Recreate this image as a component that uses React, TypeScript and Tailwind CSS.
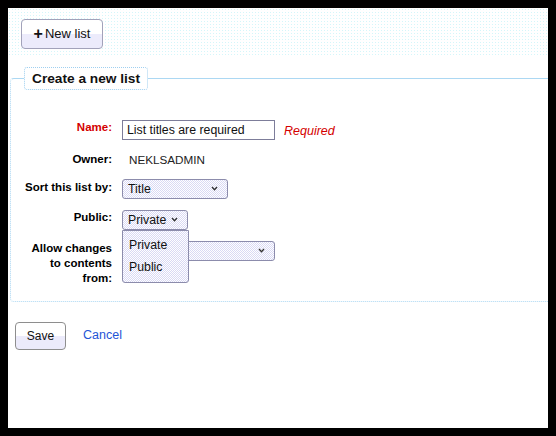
import React from 'react'

const dither = 'bg-[repeating-conic-gradient(#d9d9f4_0_25%,#ffffff_0_50%)] bg-[length:2px_2px]'

const Chevron = () => (
    <svg width="7" height="5" viewBox="0 0 7 5" className="shrink-0">
        <polyline points="1,1 3.5,3.8 6,1" fill="none" stroke="#333" strokeWidth="1.3" />
    </svg>
)

const FakeSelect: React.FC<{ value: string; width: string }> = ({ value, width }) => (
    <div
        className={`h-[20px] ${width} border border-[#8c8cac] rounded-[3px] ${dither} flex items-center justify-between pl-[5px] pr-[9px] text-[12.3px] text-[#111]`}
    >
        <span>{value}</span>
        <Chevron />
    </div>
)

const Label: React.FC<{ children: React.ReactNode; red?: boolean; className?: string }> = ({ children, red, className = '' }) => (
    <div
        className={`w-[88px] shrink-0 text-right font-bold text-[11.5px] leading-[15px] ${red ? 'text-[#d40000]' : 'text-black'} ${className}`}
    >
        {children}
    </div>
)

export default function App() {
    return (
        <div className="w-[556px] h-[436px] bg-black p-[8px] font-['Liberation_Sans',Arial,sans-serif]">
            <div className="w-[540px] h-[420px] bg-white overflow-hidden flex flex-col">
                {/* toolbar */}
                <div className="h-[47px] bg-[radial-gradient(#d4f6fa_1px,#ffffff_1px)] bg-[length:3px_3px] pl-[13px] pt-[11px]">
                    <button className="h-[30px] w-[82px] border border-[#a2a2ba] rounded-[4px] bg-[linear-gradient(#ffffff_50%,#ecebfb_50%)] flex items-center justify-center gap-[2px] text-[13px] text-[#111]">
                        <span className="font-bold text-[16px] leading-none mt-[-1px]">+</span>
                        <span>New list</span>
                    </button>
                </div>

                {/* form */}
                <fieldset className="mt-[12px] ml-[2px] mr-[-12px] border border-dotted [border-top-style:solid] border-[#acd8f3] rounded-[4px] pl-[13px] pb-[15px]">
                    <legend className="h-[23px] px-[7px] border border-dotted border-[#9fcff0] rounded-[3px] bg-white font-bold text-[13.7px] leading-[21px] text-[#111]">
                        Create a new list
                    </legend>

                    <div className="flex flex-col pt-[30px]">
                        <div className="flex items-start gap-[10px]">
                            <Label red>Name:</Label>
                            <div className="h-[20px] w-[153px] border border-[#7d7d9a] px-[4px] flex items-center text-[12.3px] text-[#111]">
                                List titles are required
                            </div>
                            <span className="ml-[-1px] mt-[2px] italic text-[12.5px] text-[#d40000]">Required</span>
                        </div>

                        <div className="flex items-start gap-[10px] mt-[11px] h-[15px]">
                            <Label>Owner:</Label>
                            <span className="pl-[7px] text-[11.7px] leading-[15px] text-[#222]">NEKLSADMIN</span>
                        </div>

                        <div className="flex items-start gap-[10px] mt-[12px]">
                            <Label className="pt-px">Sort this list by:</Label>
                            <FakeSelect value="Title" width="w-[106px]" />
                        </div>

                        <div className="flex items-start gap-[10px] mt-[11px] relative">
                            <Label>Public:</Label>
                            <FakeSelect value="Private" width="w-[66px]" />
                            {/* open dropdown */}
                            <div className={`absolute left-[98px] top-[20px] z-10 w-[67px] h-[53px] border border-[#8c8cac] rounded-b-[3px] ${dither} flex flex-col pt-[6px] text-[12.3px] text-[#111]`}>
                                <div className="pl-[6px] h-[22px] leading-[16px]">Private</div>
                                <div className="pl-[6px] leading-[16px]">Public</div>
                            </div>
                        </div>

                        <div className="flex items-start gap-[10px] mt-[11px]">
                            <Label>Allow changes to contents from:</Label>
                            <FakeSelect value="" width="w-[153px]" />
                        </div>
                    </div>
                </fieldset>

                {/* actions */}
                <div className="flex items-center pl-[7px] mt-[20px]">
                    <button className="h-[28px] w-[51px] border border-[#8e8e8e] rounded-[4px] bg-[linear-gradient(#ffffff_50%,#ecebfb_50%)] text-[12px] text-[#111]">
                        Save
                    </button>
                    <a href="#" className="ml-[17px] text-[12.5px] text-[#1f55d6]">
                        Cancel
                    </a>
                </div>
            </div>
        </div>
    )
}
